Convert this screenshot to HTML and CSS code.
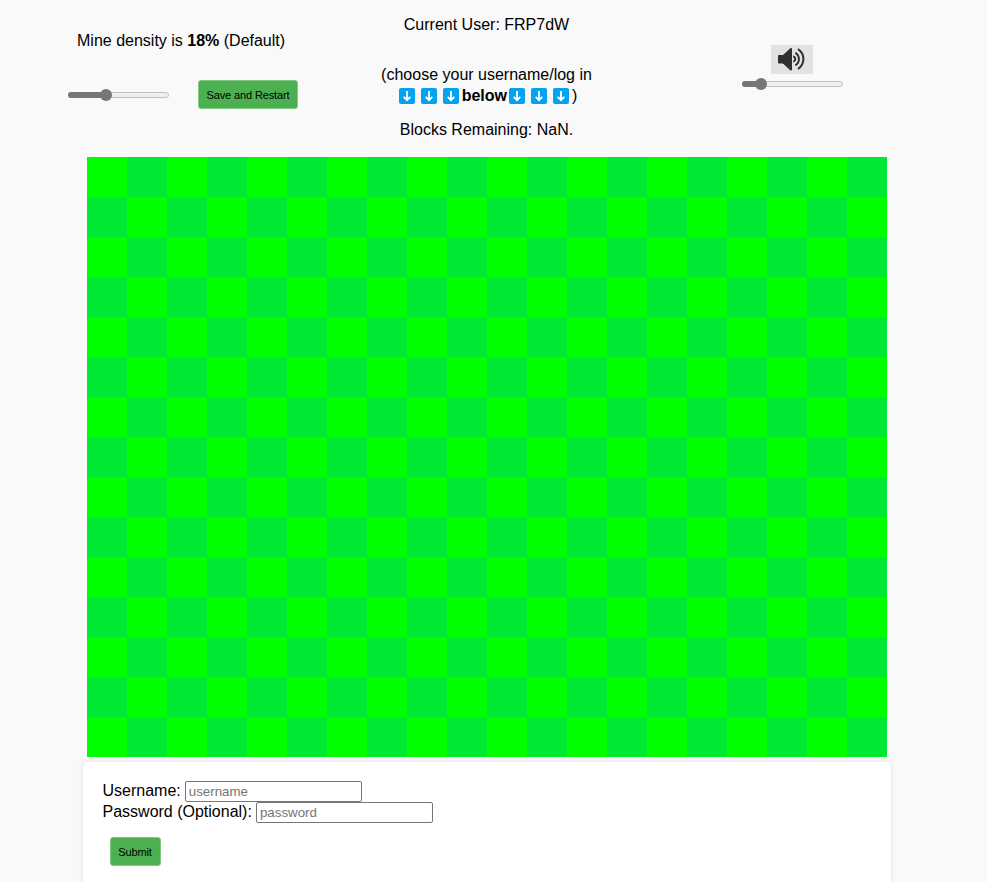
FILE: index.html
```html
<!DOCTYPE html>
<html lang="en">
<head>
<meta charset="utf-8">
<title>Minesweeper</title>
<link rel="stylesheet" href="styles.css">
</head>
<body>
<svg class="defs" aria-hidden="true">
  <symbol id="down" viewBox="0 0 16 16">
    <rect width="16" height="16" rx="2" fill="#05a3ef"/>
    <path d="M8 3v9M4.700 8.800 8 12.100l3.300-3.300" fill="none" stroke="#fff" stroke-width="1.900"/>
  </symbol>
</svg>
<main class="page">
  <header class="top">
    <section class="density">
      <p class="density-text">Mine density is <b>18%</b> (Default)</p>
      <div class="density-row">
        <div class="slider density-slider"><span class="fill"></span><span class="thumb"></span></div>
        <button class="btn save">Save and Restart</button>
      </div>
    </section>
    <section class="status">
      <p>Current User: FRP7dW</p>
      <p class="hint">(choose your username/log in<span class="arrows"><svg><use href="#down"/></svg><svg><use href="#down"/></svg><svg><use href="#down"/></svg><b>below</b><svg><use href="#down"/></svg><svg><use href="#down"/></svg><svg><use href="#down"/></svg><span>)</span></span></p>
      <p class="blocks">Blocks Remaining: NaN.</p>
    </section>
    <section class="sound">
      <div class="speaker">
        <svg viewBox="0 0 42 29">
          <path d="M7.500 10.500h4.500l7.500-7h1v21.500h-1L12 18h-4.500z" fill="#303030" stroke="#303030" stroke-linejoin="round"/>
          <path d="M22.300 11.300a3 3 0 0 1 0 5.600M24.300 7.800a7.300 7.300 0 0 1 0 12.600M27 4.200a11.800 11.800 0 0 1 0 19.800" fill="none" stroke="#303030" stroke-width="2"/>
        </svg>
      </div>
      <div class="slider volume-slider"><span class="fill"></span><span class="thumb"></span></div>
    </section>
  </header>
  <div class="board"></div>
  <form class="login">
    <div class="field"><label for="user">Username:</label><input id="user" placeholder="username"></div>
    <div class="field"><label for="pass">Password (Optional):</label><input id="pass" type="password" placeholder="password"></div>
    <button class="btn submit" type="button">Submit</button>
  </form>
</main>
</body>
</html>
```
FILE: styles.css
```css
* { box-sizing: border-box; }
html { background: #fff; }
body { margin: 0; height: 882px; overflow: hidden; font: 16px/21px "Liberation Sans", Arial, sans-serif; color: #000; }
p { margin: 0; }
.defs { display: none; }
.page { width: 987px; height: 882px; background: #f9f9f9; overflow: hidden; }
.top { display: grid; grid-template-columns: 370px 233px 384px; height: 157px; }
.density { padding-top: 30px; }
.density-text { padding-left: 77px; }
.density-row { display: flex; align-items: center; padding: 29px 0 0 68px; gap: 29px; }
.slider { display: flex; align-items: center; width: 101px; height: 6px; border: 1px solid #c2c2c2; border-radius: 3px; background: #efefef; }
.fill { height: 6px; margin-left: -1px; border-radius: 3px 0 0 3px; background: #767676; flex: none; }
.thumb { width: 12px; height: 12px; margin-left: -6px; border-radius: 50%; background: #767676; flex: none; }
.density-slider { margin-top: 1px; }
.density-slider .fill { width: 38px; }
.volume-slider .fill { width: 19px; }
.btn { height: 29px; padding: 0; border: 1px solid #83c785; border-radius: 3px; background: #4caf50; color: #000; font: 11px "Liberation Sans", Arial, sans-serif; letter-spacing: -.12px; }
.save { width: 100px; }
.status { padding-top: 14px; text-align: center; }
.hint { margin-top: 29px; }
.arrows { display: flex; align-items: center; justify-content: center; }
.arrows svg { width: 16px; height: 16px; margin: 0 3px; flex: none; }
.arrows b + svg { margin-left: 2px; }
.blocks { margin-top: 13px; }
.sound { padding: 45px 0 0 139px; }
.speaker { width: 42px; height: 29px; margin-left: 29px; background: #e2e2e2; }
.speaker svg { display: block; width: 42px; height: 29px; }
.volume-slider { margin-top: 7px; }
.board { width: 800px; height: 600px; margin-left: 87px; background: repeating-conic-gradient(#00e832 0 25%, #00ff00 0 50%) 0 0 / 80px 80px; }
.login { width: 808px; height: 150px; margin: 5px 0 0 83px; padding: 18px 19.500px; border-radius: 5px; background: #fff; box-shadow: 0 0 5px rgba(0, 0, 0, .1); }
.field { display: flex; gap: 4px; height: 21px; }
.field input { width: 177px; height: 21px; margin: 1px 0 0; padding: 1px 3px; border: 1px solid #767676; border-radius: 2px; background: #fff; font: 13.333px "Liberation Sans", Arial, sans-serif; }
.field input::placeholder { color: #757575; }
.submit { display: block; width: 51px; margin: 15px 0 0 7px; }
```
